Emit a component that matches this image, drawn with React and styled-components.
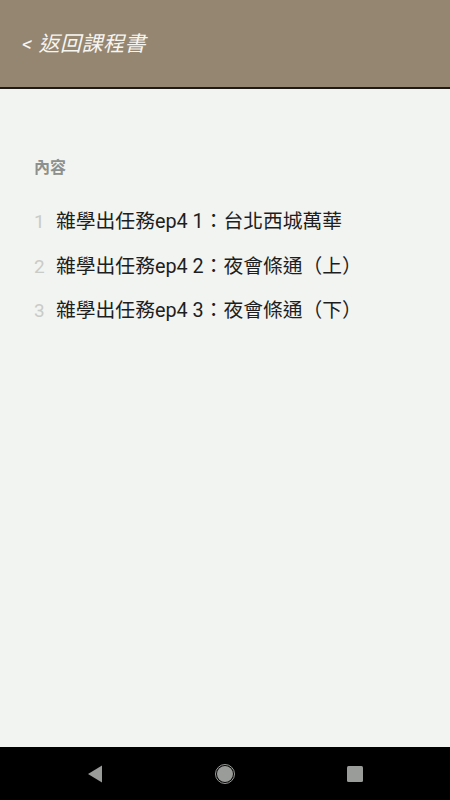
import React from "react";
import styled, { createGlobalStyle } from "styled-components";

const GlobalStyle = createGlobalStyle`
  html, body {
    margin: 0;
    padding: 0;
    background: #f2f4f1;
  }
  body {
    font-family: Roboto, "Noto Sans CJK TC", sans-serif;
  }
`;

const Screen = styled.div`
  width: 450px;
  height: 800px;
  display: flex;
  flex-direction: column;
  background: #f2f4f1;
`;

const Header = styled.header`
  height: 87px;
  background: #948671;
  border-bottom: 2px solid #1e1b17;
  display: flex;
  align-items: center;
  padding: 0 22px;
  box-sizing: content-box;
`;

const BackLink = styled.span`
  color: #f7f5f1;
  font-size: 21px;
  font-style: italic;
  letter-spacing: 0.5px;
  margin-top: -3px;
`;

const Content = styled.main`
  flex: 1;
  padding: 68px 34px 0;
`;

const SectionTitle = styled.h2`
  margin: 0 0 31px;
  font-size: 16px;
  font-weight: 700;
  color: #8d908d;
  line-height: 22px;
`;

const List = styled.ol`
  list-style: none;
  margin: 0;
  padding: 0;
  display: flex;
  flex-direction: column;
  gap: 20.5px;
`;

const Item = styled.li`
  display: flex;
  align-items: center;
  line-height: 24px;
`;

const Num = styled.span`
  width: 22px;
  font-size: 19px;
  color: #c9cbc8;
`;

const Label = styled.span`
  font-size: 19.8px;
  color: #1e1e1e;
`;

const NavBar = styled.nav`
  height: 53px;
  background: #000;
  display: flex;
  align-items: center;
  justify-content: center;
  gap: 106px;
`;

const NavButton = styled.div`
  width: 24px;
  height: 24px;
  display: flex;
  align-items: center;
  justify-content: center;
`;

const items = [
  "雜學出任務ep4 1：台北西城萬華",
  "雜學出任務ep4 2：夜會條通（上）",
  "雜學出任務ep4 3：夜會條通（下）",
];

export default function App() {
  return (
    <Screen>
      <GlobalStyle />
      <Header>
        <BackLink>&lt; 返回課程書</BackLink>
      </Header>
      <Content>
        <SectionTitle>內容</SectionTitle>
        <List>
          {items.map((t, i) => (
            <Item key={i}>
              <Num>{i + 1}</Num>
              <Label>{t}</Label>
            </Item>
          ))}
        </List>
      </Content>
      <NavBar>
        <NavButton>
          <svg width="18" height="20" viewBox="0 0 18 20">
            <path d="M16 1.5 L16 18.5 L2 10 Z" fill="#9a9c99" />
          </svg>
        </NavButton>
        <NavButton>
          <svg width="22" height="22" viewBox="0 0 22 22">
            <circle cx="11" cy="11" r="9.5" fill="none" stroke="#9a9c99" strokeWidth="1" />
            <circle cx="11" cy="11" r="8" fill="#9a9c99" />
          </svg>
        </NavButton>
        <NavButton>
          <svg width="18" height="18" viewBox="0 0 18 18">
            <rect x="1" y="1" width="16" height="16" rx="1.5" fill="#9a9c99" />
          </svg>
        </NavButton>
      </NavBar>
    </Screen>
  );
}
